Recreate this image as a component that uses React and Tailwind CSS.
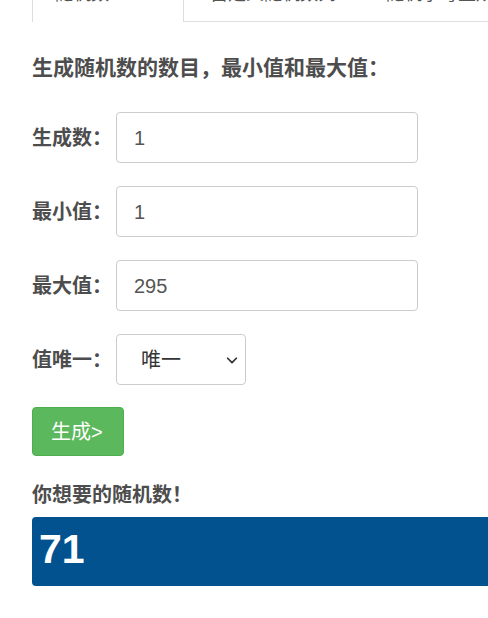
const font = { fontFamily: '"Liberation Sans", "Noto Sans CJK SC", sans-serif' };

const Field = ({ label, value }) => (
  <div className="flex items-center">
    <label className="text-[20px] font-bold text-[#4d4d4d] w-[84px] whitespace-nowrap">{label}</label>
    <div className="w-[302px] h-[51px] border border-[#cccccc] rounded-[4px] bg-white flex items-center pl-[17px] text-[20px] text-[#555555]">
      {value}
    </div>
  </div>
);

const App = () => {
  return (
    <div className="w-full min-h-[618px] bg-white overflow-hidden" style={font}>
      <div className="flex h-[22px] pl-8 overflow-hidden">
        <div className="w-[152px] border-l border-r border-[#dddddd] bg-white pl-[22px] shrink-0">
          <span className="block mt-[-15px] text-[18px] leading-[18px] text-[#555555]">随机数</span>
        </div>
        <div className="flex-1 border-b border-[#dddddd] flex gap-[50px] pl-[26px] whitespace-nowrap">
          <span className="block mt-[-15px] text-[18px] leading-[18px] text-[#555555]">自定义随机数列</span>
          <span className="block mt-[-15px] text-[18px] leading-[18px] text-[#555555]">随机字母生成</span>
        </div>
      </div>

      <div className="px-8">
        <h2 className="mt-[32px] text-[21px] leading-[28px] font-bold text-[#4d4d4d]">
          生成随机数的数目，最小值和最大值：
        </h2>

        <div className="mt-[30px] flex flex-col gap-[23px]">
          <Field label="生成数：" value="1" />
          <Field label="最小值：" value="1" />
          <Field label="最大值：" value="295" />
          <div className="flex items-center">
            <label className="text-[20px] font-bold text-[#4d4d4d] w-[84px] whitespace-nowrap">值唯一：</label>
            <div className="w-[130px] h-[51px] border border-[#cccccc] rounded-[4px] bg-white flex items-center justify-between pl-[24px] pr-[6px] text-[20px] text-[#333333]">
              <span>唯一</span>
              <svg width="14" height="14" viewBox="0 0 16 16" fill="none" stroke="#333" strokeWidth="2" strokeLinecap="round" strokeLinejoin="round">
                <path d="M3 6l5 5 5-5" />
              </svg>
            </div>
          </div>
        </div>

        <button className="mt-[22px] h-[49px] w-[92px] pl-[18px] text-left rounded-[4px] bg-[#5cb85c] border border-[#4cae4c] text-white text-[20px]">
          生成&gt;
        </button>

        <h3 className="mt-[26px] text-[20px] leading-[26px] font-bold text-[#4d4d4d]">你想要的随机数！</h3>

        <div className="mt-[9px] w-[600px] h-[69px] bg-[#02528f] rounded-l-[4px] pt-[12px] pl-[7px]">
          <span className="block text-[41px] leading-[41px] font-bold text-white">71</span>
        </div>
      </div>
    </div>
  );
};

export default App;
